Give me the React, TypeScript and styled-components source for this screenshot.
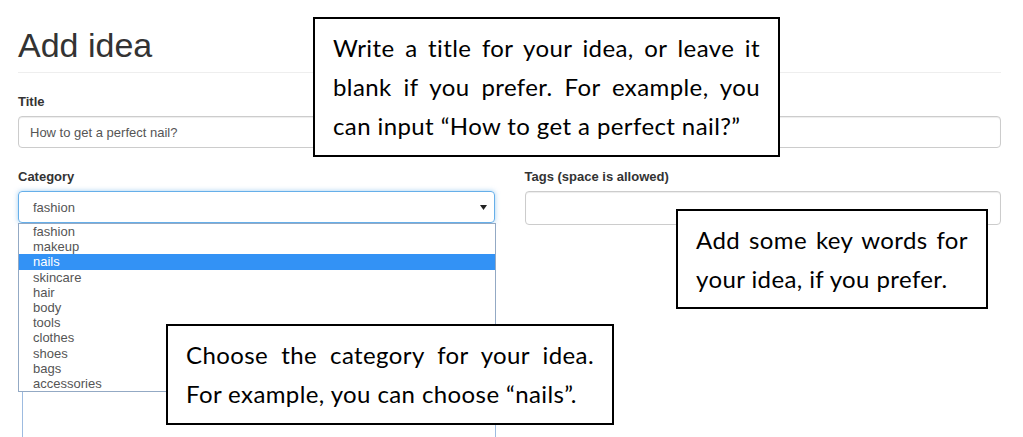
import React from "react";
import styled, { createGlobalStyle } from "styled-components";

const Global = createGlobalStyle`
  html, body { margin: 0; padding: 0; background: #fff; }
  body { font-family: "Liberation Sans", Arial, sans-serif; }
  * { box-sizing: border-box; }
`;

const Page = styled.div`
  position: relative;
  width: 1023px;
  height: 437px;
  overflow: hidden;
  padding: 25px 22px 0 18px;
  background: #fff;
`;

const Heading = styled.h1`
  margin: 0;
  font-size: 34px;
  line-height: 40px;
  font-weight: 400;
  color: #333;
  padding-bottom: 7px;
  border-bottom: 1px solid #eee;
`;

const Group = styled.div`
  margin-top: 21px;
`;

const Row = styled.div`
  display: grid;
  grid-template-columns: 1fr 1fr;
  column-gap: 30px;
  margin-top: 21px;
`;

const Label = styled.label`
  display: block;
  font-size: 13px;
  line-height: 15px;
  font-weight: 700;
  color: #333;
  margin-bottom: 7px;
`;

const TextInput = styled.div<{ $h?: number }>`
  height: ${(p) => p.$h ?? 32}px;
  border: 1px solid #ccc;
  border-radius: 4px;
  padding: 0 11px;
  display: flex;
  align-items: center;
  font-size: 13px;
  color: #555;
  box-shadow: inset 0 1px 1px rgba(0, 0, 0, 0.075);
`;

const SelectWrap = styled.div`
  position: relative;
`;

const SelectBox = styled.div`
  height: 32px;
  border: 1px solid #66afe9;
  border-radius: 4px;
  padding: 0 7px 0 14px;
  display: flex;
  align-items: center;
  justify-content: space-between;
  font-size: 13px;
  color: #555;
  box-shadow: 0 0 5px rgba(102, 175, 233, 0.6);
`;

const DropList = styled.ul`
  position: absolute;
  top: 100%;
  left: 0;
  right: -1px;
  margin: 0;
  padding: 0;
  list-style: none;
  background: #fff;
  border: 1px solid #93a9c4;
  z-index: 2;
`;

const DropItem = styled.li<{ $active?: boolean }>`
  height: 15.2px;
  line-height: 15.2px;
  padding-left: 14px;
  font-size: 13px;
  color: ${(p) => (p.$active ? "#fff" : "#555")};
  background: ${(p) => (p.$active ? "#3392f5" : "transparent")};
`;

const TextArea = styled.div`
  margin-top: 20px;
  margin-left: 4px;
  margin-right: -1px;
  height: 260px;
  border: 1px solid #9dbbe0;
  border-radius: 4px;
`;

const Callout = styled.div<{ $top: number; $left: number; $w: number; $h: number }>`
  position: absolute;
  top: ${(p) => p.$top}px;
  left: ${(p) => p.$left}px;
  width: ${(p) => p.$w}px;
  height: ${(p) => p.$h}px;
  border: 2px solid #000;
  background: #fff;
  padding: 9px 18px 0 18px;
  font-family: Lato, "Open Sans", sans-serif;
  font-size: 24px;
  letter-spacing: 0.4px;
  line-height: 39px;
  color: #000;
  z-index: 5;
`;

const Line = styled.span<{ $justify?: boolean }>`
  display: block;
  white-space: nowrap;
  text-align: ${(p) => (p.$justify ? "justify" : "left")};
  text-align-last: ${(p) => (p.$justify ? "justify" : "left")};
  ${(p) => (p.$justify ? "white-space: normal;" : "")}
`;

const Caret = () => (
  <svg width="7" height="5" viewBox="0 0 7 5">
    <path d="M0 0 H7 L3.5 5 Z" fill="#222" />
  </svg>
);

const categories = [
  "fashion",
  "makeup",
  "nails",
  "skincare",
  "hair",
  "body",
  "tools",
  "clothes",
  "shoes",
  "bags",
  "accessories",
];

export default function App() {
  return (
    <>
      <Global />
      <Page>
        <Heading>Add idea</Heading>
        <Group>
          <Label>Title</Label>
          <TextInput>How to get a perfect nail?</TextInput>
        </Group>
        <Row>
          <div>
            <Label>Category</Label>
            <SelectWrap>
              <SelectBox>
                <span>fashion</span>
                <Caret />
              </SelectBox>
              <DropList>
                {categories.map((c) => (
                  <DropItem key={c} $active={c === "nails"}>
                    {c}
                  </DropItem>
                ))}
              </DropList>
            </SelectWrap>
            <TextArea />
          </div>
          <div>
            <Label>Tags (space is allowed)</Label>
            <TextInput $h={34} />
          </div>
        </Row>

        <Callout $top={17} $left={313} $w={467} $h={140}>
          <Line $justify>Write a title for your idea, or leave it</Line>
          <Line $justify>blank if you prefer. For example, you</Line>
          <Line>can input “How to get a perfect nail?”</Line>
        </Callout>

        <Callout $top={209} $left={676} $w={312} $h={100}>
          <Line $justify>Add some key words for</Line>
          <Line>your idea, if you prefer.</Line>
        </Callout>

        <Callout $top={324} $left={166} $w={448} $h={101}>
          <Line $justify>Choose the category for your idea.</Line>
          <Line>For example, you can choose “nails”.</Line>
        </Callout>
      </Page>
    </>
  );
}
